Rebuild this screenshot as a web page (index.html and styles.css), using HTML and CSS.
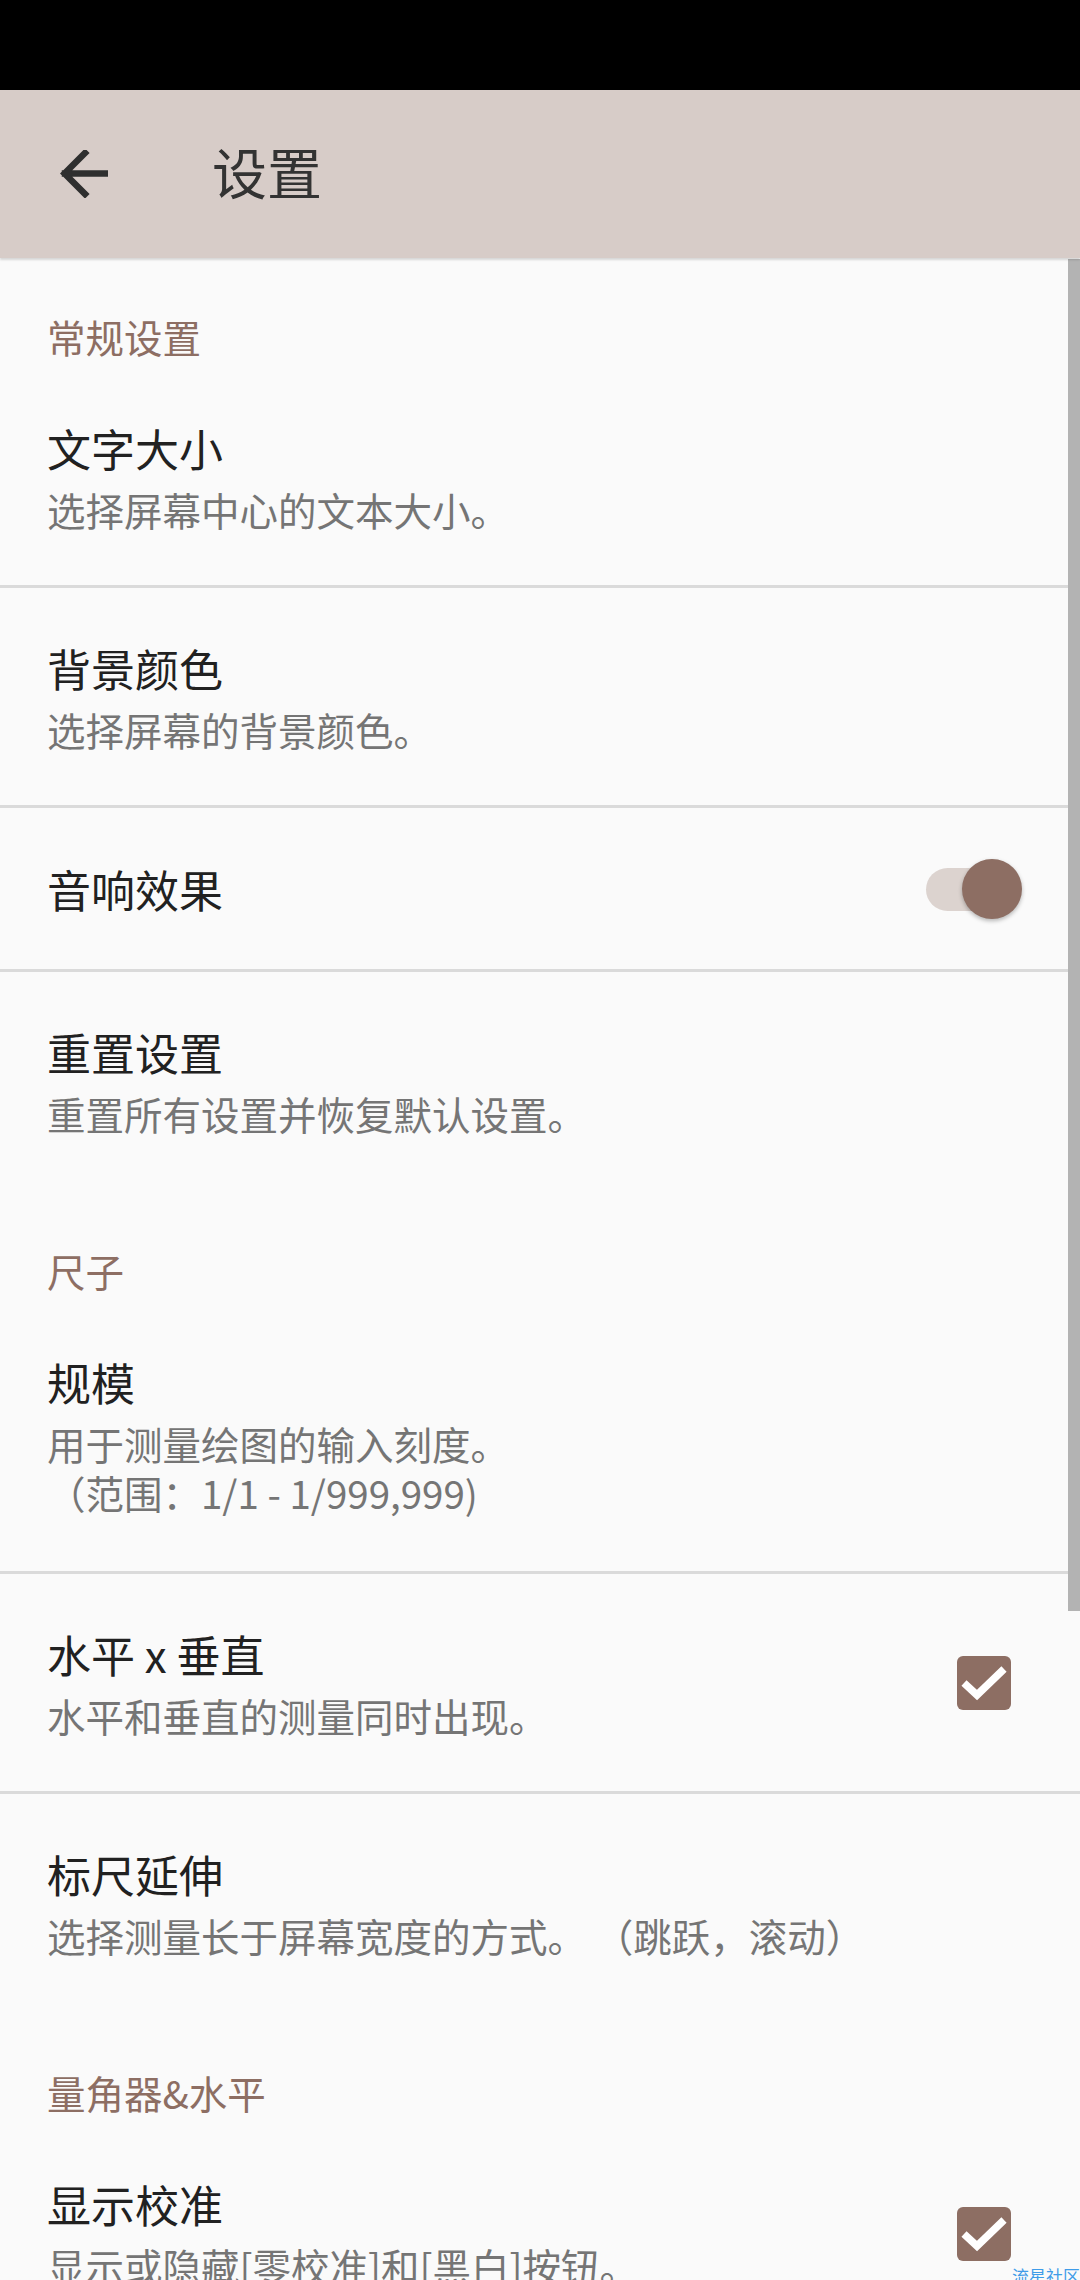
FILE: index.html
```html
<!DOCTYPE html>
<html lang="zh-CN">
<head>
<meta charset="utf-8">
<title>设置</title>
<link rel="stylesheet" href="styles.css">
</head>
<body>
<div class="screen">
  <div class="statusbar"></div>
  <header class="appbar">
    <svg class="back" viewBox="0 0 48 48" width="48" height="48" aria-hidden="true">
      <path d="M47 23.5 H5 M25 3 L4.5 23.5 L25 44" fill="none" stroke="#2f2f2f" stroke-width="6.5" stroke-linecap="square" stroke-linejoin="miter"/>
    </svg>
    <h1 class="title">设置</h1>
  </header>

  <main class="list">
    <div class="category">常规设置</div>
    <div class="item divided">
      <div class="text">
        <div class="item-title">文字大小</div>
        <div class="item-summary">选择屏幕中心的文本大小。</div>
      </div>
    </div>
    <div class="item divided">
      <div class="text">
        <div class="item-title">背景颜色</div>
        <div class="item-summary">选择屏幕的背景颜色。</div>
      </div>
    </div>
    <div class="item single divided">
      <div class="text">
        <div class="item-title">音响效果</div>
      </div>
      <div class="switch">
        <div class="track"></div>
        <div class="thumb"></div>
      </div>
    </div>
    <div class="item">
      <div class="text">
        <div class="item-title">重置设置</div>
        <div class="item-summary">重置所有设置并恢复默认设置。</div>
      </div>
    </div>

    <div class="category">尺子</div>
    <div class="item tall divided">
      <div class="text">
        <div class="item-title">规模</div>
        <div class="item-summary">用于测量绘图的输入刻度。<br>（范围：1/1 - 1/999,999)</div>
      </div>
    </div>
    <div class="item divided">
      <div class="text">
        <div class="item-title">水平 x 垂直</div>
        <div class="item-summary">水平和垂直的测量同时出现。</div>
      </div>
      <div class="checkbox">
        <svg viewBox="0 0 54 54" width="54" height="54" aria-hidden="true">
          <path d="M7 27 L20 39 L47 13" fill="none" stroke="#ffffff" stroke-width="7.5"/>
        </svg>
      </div>
    </div>
    <div class="item">
      <div class="text">
        <div class="item-title">标尺延伸</div>
        <div class="item-summary">选择测量长于屏幕宽度的方式。 （跳跃，滚动）</div>
      </div>
    </div>

    <div class="category">量角器&amp;水平</div>
    <div class="item">
      <div class="text">
        <div class="item-title">显示校准</div>
        <div class="item-summary">显示或隐藏[零校准]和[黑白]按钮。</div>
      </div>
      <div class="checkbox">
        <svg viewBox="0 0 54 54" width="54" height="54" aria-hidden="true">
          <path d="M7 27 L20 39 L47 13" fill="none" stroke="#ffffff" stroke-width="7.5"/>
        </svg>
      </div>
    </div>
  </main>

  <div class="scrollbar"></div>
  <div class="watermark">流星社区</div>
</div>
</body>
</html>
```

FILE: styles.css
```css
* {
  box-sizing: border-box;
}

html, body {
  margin: 0;
  padding: 0;
}

body {
  width: 1080px;
  height: 2280px;
  overflow: hidden;
  background: #fafafa;
  font-family: "Noto Sans CJK SC", "Noto Sans", Roboto, sans-serif;
}

.screen {
  position: relative;
  width: 1080px;
  height: 2280px;
  overflow: hidden;
  background: #fafafa;
}

.statusbar {
  height: 90px;
  background: #000;
}

.appbar {
  height: 168px;
  background: #d7ccc8;
  display: flex;
  align-items: center;
  padding-left: 60px;
  box-shadow: 0 2px 2px rgba(0, 0, 0, 0.14);
  position: relative;
  z-index: 1;
}

.back {
  display: block;
  flex: none;
}

.title {
  margin: 0 0 0 104px;
  font-size: 55px;
  font-weight: 400;
  color: #333;
  line-height: 1;
  position: relative;
  top: -4px;
}

.list {
  display: flex;
  flex-direction: column;
}

.category {
  height: 110px;
  padding: 55px 0 0 47px;
  font-size: 38.5px;
  line-height: 46px;
  color: #8d6e63;
}

.item {
  display: flex;
  align-items: center;
  height: 220px;
  padding: 0 69px 0 47px;
}

.item.divided {
  border-bottom: 3px solid #dadada;
}

.item.tall {
  height: 272px;
}

.item .text {
  flex: 1;
  align-self: flex-start;
  padding-top: 50px;
}

.item.single {
  height: 164px;
}

.item.single .text {
  align-self: center;
  padding-top: 0;
}

.item-title {
  font-size: 44px;
  line-height: 60px;
  color: #212121;
}

.item-summary {
  margin-top: 7px;
  font-size: 38.5px;
  line-height: 49px;
  color: #757575;
}

.switch {
  position: relative;
  width: 96px;
  height: 60px;
  margin-right: -11px;
  flex: none;
}

.track {
  position: absolute;
  left: 0;
  top: 9px;
  width: 92px;
  height: 43px;
  border-radius: 22px;
  background: #dcd3cf;
}

.thumb {
  position: absolute;
  right: 0;
  top: 0;
  width: 60px;
  height: 60px;
  border-radius: 50%;
  background: #8d6e63;
  box-shadow: 0 2px 4px rgba(0, 0, 0, 0.28);
}

.checkbox {
  width: 54px;
  height: 54px;
  border-radius: 6px;
  background: #8d6e63;
  flex: none;
}

.checkbox svg {
  display: block;
}

.scrollbar {
  position: absolute;
  left: 1068px;
  top: 259px;
  width: 12px;
  height: 1352px;
  background: #b3b3b3;
}

.watermark {
  position: absolute;
  right: 0;
  top: 2266px;
  font-size: 17px;
  line-height: 20px;
  color: #3f9ce8;
}
```
